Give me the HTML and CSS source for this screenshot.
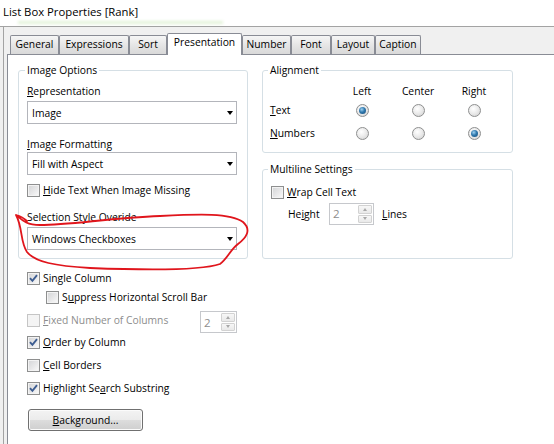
FILE: index.html
```html
<!DOCTYPE html>
<html>
<head>
<meta charset="utf-8">
<title>List Box Properties [Rank]</title>
<link rel="stylesheet" href="styles.css">
</head>
<body>
<div class="titlebar">
  <div class="title">List Box Properties [Rank]</div>
  <div class="glow"></div>
</div>
<div class="window">
  <div class="tabs">
    <div class="tab">General</div>
    <div class="tab">Expressions</div>
    <div class="tab">Sort</div>
    <div class="tab selected">Presentation</div>
    <div class="tab">Number</div>
    <div class="tab">Font</div>
    <div class="tab">Layout</div>
    <div class="tab">Caption</div>
  </div>
  <div class="panel">
    <div class="col col-left">
      <fieldset class="group group-image">
        <legend>Image Options</legend>
        <div class="label"><u>R</u>epresentation</div>
        <div class="combo"><span>Image</span><i class="arrow"></i></div>
        <div class="label label-gap"><u>I</u>mage Formatting</div>
        <div class="combo combo-tight"><span>Fill with Aspect</span><i class="arrow"></i></div>
        <div class="check check-hide"><span class="cb"></span><span><u>H</u>ide Text When Image Missing</span></div>
        <div class="label label-gap">Selection Style Overide</div>
        <div class="combo"><span>Windows Checkboxes</span><i class="arrow"></i></div>
      </fieldset>
      <div class="options">
        <div class="check"><span class="cb checked"><svg viewBox="0 0 11 11" width="11" height="11"><path d="M2 5.2 L4.4 7.8 L9 2.2" fill="none" stroke="#3d5d91" stroke-width="1.9"/></svg></span><span>Sin<u>g</u>le Column</span></div>
        <div class="check check-sub"><span class="cb"></span><span>S<u>u</u>ppress Horizontal Scroll Bar</span></div>
        <div class="row-fixed">
          <div class="check disabled"><span class="cb"></span><span><u>F</u>ixed Number of Columns</span></div>
          <div class="spin spin-cols"><span class="spin-val">2</span><span class="spin-btns"><span class="sb"><i class="up"></i></span><span class="sb"><i class="down"></i></span></span></div>
        </div>
        <div class="check check-order"><span class="cb checked"><svg viewBox="0 0 11 11" width="11" height="11"><path d="M2 5.2 L4.4 7.8 L9 2.2" fill="none" stroke="#3d5d91" stroke-width="1.9"/></svg></span><span><u>O</u>rder by Column</span></div>
        <div class="check check-next"><span class="cb"></span><span><u>C</u>ell Borders</span></div>
        <div class="check check-next"><span class="cb checked"><svg viewBox="0 0 11 11" width="11" height="11"><path d="M2 5.2 L4.4 7.8 L9 2.2" fill="none" stroke="#3d5d91" stroke-width="1.9"/></svg></span><span>Highlight Se<u>a</u>rch Substring</span></div>
        <div class="button"><span><u>B</u>ackground...</span></div>
      </div>
    </div>
    <div class="col col-right">
      <fieldset class="group group-align">
        <legend>Alignment</legend>
        <div class="align-grid">
          <span></span>
          <span class="hdr">Left</span>
          <span class="hdr">Center</span>
          <span class="hdr">Right</span>
          <span class="rlabel"><u>T</u>ext</span>
          <span class="radio on"></span>
          <span class="radio"></span>
          <span class="radio"></span>
          <span class="rlabel"><u>N</u>umbers</span>
          <span class="radio"></span>
          <span class="radio"></span>
          <span class="radio on"></span>
        </div>
      </fieldset>
      <fieldset class="group group-multi">
        <legend>Multiline Settings</legend>
        <div class="check"><span class="cb"></span><span><u>W</u>rap Cell Text</span></div>
        <div class="height-row">
          <span class="hlabel">He<u>i</u>ght</span>
          <div class="spin spin-lines"><span class="spin-val">2</span><span class="spin-btns"><span class="sb"><i class="up"></i></span><span class="sb"><i class="down"></i></span></span></div>
          <span class="lines"><u>L</u>ines</span>
        </div>
      </fieldset>
    </div>
  </div>
</div>
<svg class="ink" width="554" height="444" viewBox="0 0 554 444">
  <path d="M16 215 C22 220 26 225 40 225 C70 225 110 218 160 216 C200 214 230 213 243 222 C252 230 246 238 238 244 C230 250 228 258 220 264 C200 271 140 270 90 268 C55 266 35 262 27 252 C20 242 23 228 16 215 C20 216 24 218 27 221" fill="none" stroke="#e0151c" stroke-width="1.8" stroke-linecap="round" stroke-linejoin="round"/>
</svg>
</body>
</html>
```

FILE: styles.css
```css
html {
  margin: 0;
  padding: 0;
  overflow: hidden;
  background: linear-gradient(to bottom, #ffffff 0, #ffffff 26px, #a3a3a3 26px, #a3a3a3 27px, #f0f0f0 27px) no-repeat;
  background-color: #f0f0f0;
}
body {
  margin: 0;
  padding: 0;
  position: relative;
  height: 444px;
  overflow: hidden;
  font-family: "Open Sans", "Liberation Sans", sans-serif;
  font-size: 10.3px;
  color: #000;
}
u {
  text-decoration: underline;
  text-underline-offset: 1px;
}

/* title */
.titlebar {
  height: 26px;
  box-sizing: border-box;
  padding: 5px 0 0 3px;
  background: #ffffff;
}
.title {
  font-size: 11.3px;
  line-height: 14px;
}
.glow {
  margin: 2px 0 0 15px;
  width: 205px;
  height: 3px;
  background: rgba(140, 205, 100, 0.25);
  filter: blur(1.5px);
}

/* window */
.window {
  box-sizing: border-box;
  margin-left: 3px;
  margin-right: -40px;
  height: 418px;
  border-left: 1px solid #a3a3a3;
  border-top: 1px solid #a3a3a3;
  background: #f0f0f0;
  padding: 6px 0 0 3px;
}

.tabs {
  display: flex;
  align-items: flex-end;
  height: 21px;
  margin-left: 3px;
}
.tab {
  box-sizing: border-box;
  height: 19px;
  border: 1px solid #898c95;
  border-bottom: none;
  border-radius: 2px 2px 0 0;
  background: linear-gradient(#f6f6f6, #e4e4e4 55%, #d9d9d9);
  display: flex;
  align-items: center;
  justify-content: center;
  padding-bottom: 2px;
  line-height: 14px;
  white-space: nowrap;
}
.tab:nth-child(1) { width: 49px; }
.tab:nth-child(2) { width: 70px; }
.tab:nth-child(3) { width: 38px; }
.tab:nth-child(4) { width: 75px; }
.tab:nth-child(5) { width: 49px; }
.tab:nth-child(6) { width: 40px; }
.tab:nth-child(7) { width: 44px; }
.tab:nth-child(8) { width: 46px; }
.tab.selected {
  height: 22px;
  margin-bottom: -1px;
  background: #ffffff;
  padding-bottom: 5px;
  position: relative;
  z-index: 1;
}

.panel {
  box-sizing: border-box;
  height: 390px;
  border: 1px solid #898c95;
  border-right: none;
  border-bottom: none;
  background: #ffffff;
  padding: 8px 0 0 10px;
  display: flex;
  gap: 14px;
  align-items: flex-start;
}

.col {
  display: flex;
  flex-direction: column;
}
.col-left { width: 230px; }
.col-right { width: 251px; }

/* group boxes */
.group {
  box-sizing: border-box;
  margin: 0;
  min-width: 0;
  border: 1px solid #d5dfe5;
  border-radius: 3px;
  padding: 7px 8px 8px 8px;
}
.group legend {
  padding: 0 2px;
  margin-left: -2px;
  line-height: 14px;
}
.group-image { width: 230px; }
.group-align { width: 251px; }
.group-align legend { margin-left: -3px; }
.group-multi {
  width: 251px;
  margin-top: 9px;
  padding: 9px 8px 33px 8px;
}
.group-multi legend { margin-left: -3px; }

.label {
  line-height: 14px;
}
.label-gap {
  margin-top: 13px;
}

/* combo box */
.combo {
  box-sizing: border-box;
  width: 210px;
  height: 23px;
  margin-top: 3px;
  border: 1px solid #b3b5bb;
  background: #ffffff;
  display: flex;
  align-items: center;
  padding-left: 4px;
  line-height: 14px;
}
.combo-tight { margin-top: 1px; }
.arrow {
  margin-left: auto;
  margin-right: 3px;
  width: 0;
  height: 0;
  border-left: 3.5px solid transparent;
  border-right: 3.5px solid transparent;
  border-top: 4px solid #000;
}

/* checkboxes */
.check {
  display: flex;
  align-items: center;
  gap: 3px;
  line-height: 14px;
  height: 14px;
  white-space: nowrap;
}
.check-hide { margin-top: 8px; }
.cb {
  box-sizing: border-box;
  width: 13px;
  height: 13px;
  flex: 0 0 13px;
  border: 1px solid #8e8f8f;
  background: linear-gradient(135deg, #d3d4d6 0%, #e8e8e9 55%, #fbfbfb 100%);
  box-shadow: inset 0 0 0 1px #f3f3f3;
  display: flex;
  align-items: center;
  justify-content: center;
}
.cb svg { display: block; }
.check.disabled { color: #8d8d8d; }
.check.disabled .cb {
  border-color: #c5c5c5;
  background: #f4f4f4;
  box-shadow: none;
}

.options {
  margin-top: 12px;
  padding: 0 11px 0 9px;
  display: flex;
  flex-direction: column;
}
.check-sub {
  margin-top: 5px;
  margin-left: 19px;
}
.row-fixed {
  display: flex;
  align-items: flex-start;
  margin-top: 7px;
  height: 22px;
}
.row-fixed .check { margin-top: 2px; }
.row-fixed .spin { margin-left: auto; }
.check-order { margin-top: 2px; }
.check-next { margin-top: 9px; }

/* spinner */
.spin {
  box-sizing: border-box;
  height: 22px;
  border: 1px solid #c6c8cc;
  background: #ffffff;
  display: flex;
  align-items: stretch;
  color: #8d8d8d;
}
.spin-cols { width: 37px; }
.spin-lines { width: 45px; }
.spin-val {
  display: flex;
  align-items: center;
  padding-left: 3px;
  font-size: 11.5px;
}
.spin-btns {
  margin-left: auto;
  width: 16px;
  display: flex;
  flex-direction: column;
  padding: 1px;
  gap: 1px;
  box-sizing: border-box;
}
.sb {
  flex: 1;
  box-sizing: border-box;
  border: 1px solid #d2d2d2;
  border-radius: 1px;
  background: linear-gradient(#f7f7f7, #e9e9e9);
  display: flex;
  align-items: center;
  justify-content: center;
}
.sb i {
  width: 0;
  height: 0;
  border-left: 2.5px solid transparent;
  border-right: 2.5px solid transparent;
}
.sb i.up { border-bottom: 3px solid #a8a8a8; }
.sb i.down { border-top: 3px solid #a8a8a8; }

/* button */
.button {
  box-sizing: border-box;
  margin-top: 14px;
  margin-left: 1px;
  width: 115px;
  height: 22px;
  border: 1px solid #707070;
  border-radius: 3px;
  background: linear-gradient(#f3f3f3 0%, #ebebeb 50%, #dddddd 50%, #cfcfcf 100%);
  box-shadow: inset 0 0 0 1px #fbfbfb;
  display: flex;
  align-items: center;
  justify-content: center;
  line-height: 14px;
}

/* alignment */
.align-grid {
  display: grid;
  grid-template-columns: 64px 56px 56px 56px;
  grid-template-rows: 14px 24px 22px;
  align-items: center;
  justify-items: center;
  line-height: 14px;
  margin-left: -1px;
}
.rlabel { justify-self: start; }
.radio {
  box-sizing: border-box;
  width: 13px;
  height: 13px;
  border-radius: 50%;
  border: 1px solid #8e8f8f;
  background: radial-gradient(circle at 40% 35%, #ffffff 0%, #ececec 45%, #cfcfcf 100%);
  display: flex;
  align-items: center;
  justify-content: center;
}
.radio.on::after {
  content: "";
  width: 7px;
  height: 7px;
  border-radius: 50%;
  background: radial-gradient(circle at 40% 35%, #9fd2f2 0%, #2f78ad 45%, #184c78 100%);
}

/* multiline */
.height-row {
  display: flex;
  align-items: center;
  height: 22px;
  margin-top: 4px;
  padding-left: 17px;
  line-height: 14px;
}
.hlabel { width: 41px; }
.lines { margin-left: 8px; }

/* annotation */
.ink {
  position: absolute;
  left: 0;
  top: 0;
  pointer-events: none;
}
```
